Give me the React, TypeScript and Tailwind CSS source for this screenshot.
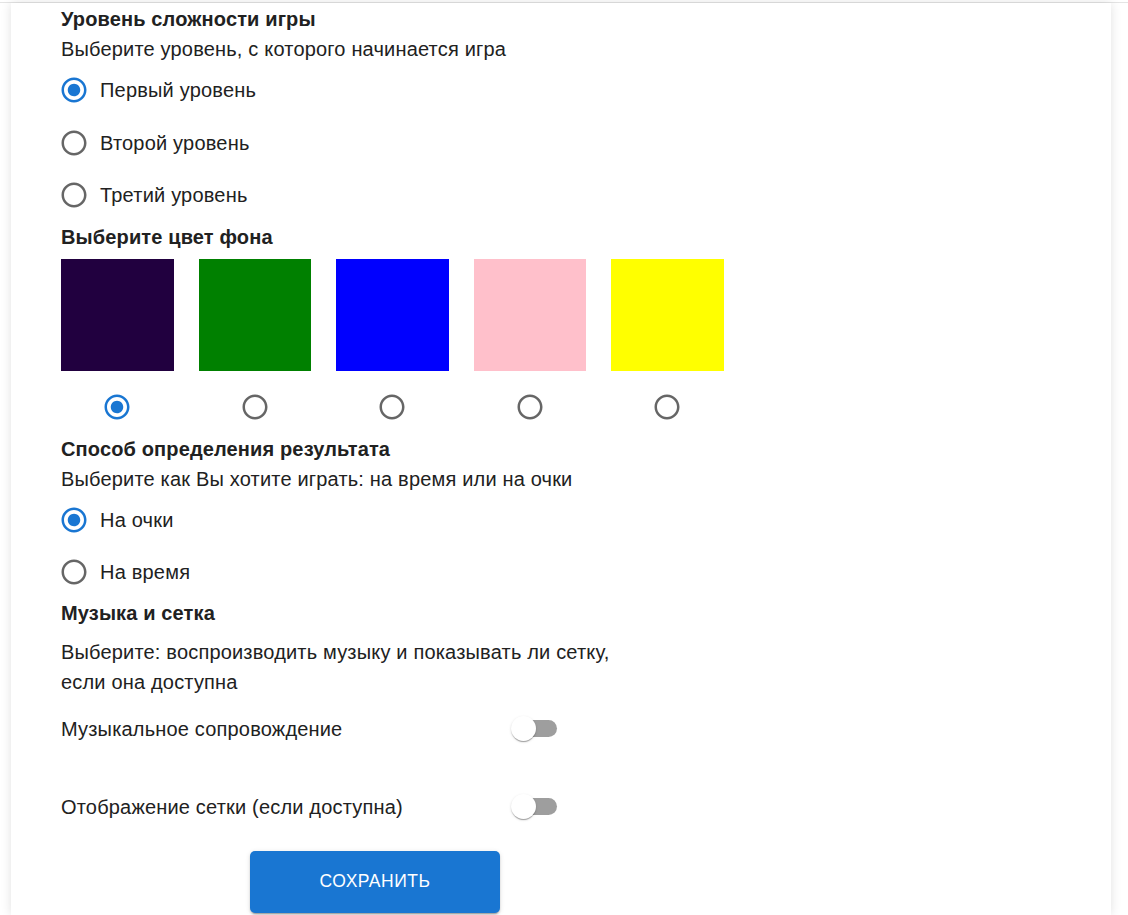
import React from "react";

const FONT = { fontFamily: '"Liberation Sans", Arial, Helvetica, sans-serif' };

function RadioIcon({ checked }: { checked: boolean }) {
  return (
    <svg width="30" height="30" viewBox="0 0 24 24" className="shrink-0">
      <path
        fill={checked ? "#1976d2" : "#666666"}
        d="M12 2C6.48 2 2 6.48 2 12s4.48 10 10 10 10-4.48 10-10S17.52 2 12 2zm0 18c-4.42 0-8-3.58-8-8s3.58-8 8-8 8 3.58 8 8-3.58 8-8 8z"
      />
      {checked && (
        <path
          fill="#1976d2"
          d="M8.465 8.465C9.37 7.56 10.62 7 12 7C14.76 7 17 9.24 17 12C17 13.38 16.44 14.63 15.535 15.535C14.63 16.44 13.38 17 12 17C9.24 17 7 14.76 7 12C7 10.62 7.56 9.37 8.465 8.465Z"
        />
      )}
    </svg>
  );
}

function RadioRow({ label, checked }: { label: string; checked: boolean }) {
  return (
    <div className="flex h-[52.5px] items-center">
      <div className="-ml-[2.5px] flex items-center">
        <RadioIcon checked={checked} />
      </div>
      <span className="ml-[11.5px] text-[20px] leading-[30px] tracking-[0.2px] text-[#212121]">{label}</span>
    </div>
  );
}

function Heading({ children }: { children: React.ReactNode }) {
  return <div className="text-[20px] font-bold leading-[30px] tracking-[0.14px] text-[#212121]">{children}</div>;
}

function Text({ children }: { children: React.ReactNode }) {
  return <div className="text-[20px] leading-[30px] tracking-[0.18px] text-[#212121]">{children}</div>;
}

function Switch() {
  return (
    <div className="relative h-[30px] w-[50px]">
      <div className="absolute left-[3.5px] top-[6.25px] h-[17.5px] w-[42.5px] rounded-full bg-[#9e9e9e]" />
      <div className="absolute left-0 top-[2.5px] h-[25px] w-[25px] rounded-full bg-white shadow-[0_2px_1px_-1px_rgba(0,0,0,0.2),0_1px_1px_0_rgba(0,0,0,0.14),0_1px_3px_0_rgba(0,0,0,0.12)]" />
    </div>
  );
}

const colors = ["#21003f", "#008000", "#0000ff", "#ffc0cb", "#ffff00"];

export default function App() {
  return (
    <div className="min-h-[915px] bg-white" style={FONT}>
      <div className="h-[2px] bg-white" />
      <div className="h-px bg-[#e4e4e4]" />
      <div className="ml-[11px] h-[912px] w-[1100px] overflow-hidden bg-white pl-[50px] pt-px shadow-[0_0_10px_rgba(0,0,0,0.12)]">
        <Heading>Уровень сложности игры</Heading>
        <Text>Выберите уровень, с которого начинается игра</Text>
        <RadioRow label="Первый уровень" checked />
        <RadioRow label="Второй уровень" checked={false} />
        <RadioRow label="Третий уровень" checked={false} />

        <Heading>Выберите цвет фона</Heading>
        <div className="mt-[7px] flex gap-[25px]">
          {colors.map((c, i) => (
            <div key={c} className="flex w-[112.5px] flex-col items-center">
              <div className="h-[112px] w-[112.5px]" style={{ backgroundColor: c }} />
              <div className="mt-[10px] flex h-[52.5px] items-center">
                <RadioIcon checked={i === 0} />
              </div>
            </div>
          ))}
        </div>

        <div className="mt-[0.5px]">
          <Heading>Способ определения результата</Heading>
          <Text>Выберите как Вы хотите играть: на время или на очки</Text>
        </div>
        <RadioRow label="На очки" checked />
        <RadioRow label="На время" checked={false} />

        <div className="-mt-[0.5px]">
          <Heading>Музыка и сетка</Heading>
        </div>
        <div className="mt-[8.5px] w-[590px]">
          <Text>Выберите: воспроизводить музыку и показывать ли сетку, если она доступна</Text>
        </div>

        <div className="mt-[8px] flex h-[48px] items-center">
          <div className="w-[450px] text-[20px] leading-[30px] tracking-[0.18px] text-[#212121]">Музыкальное сопровождение</div>
          <Switch />
        </div>
        <div className="mt-[30px] flex h-[48px] items-center">
          <div className="w-[450px] text-[20px] leading-[30px] tracking-[0.18px] text-[#212121]">Отображение сетки (если доступна)</div>
          <Switch />
        </div>

        <div className="mt-[20px] pl-[189px]">
          <button className="flex h-[62px] w-[250px] items-center justify-center rounded-[5px] bg-[#1976d2] pb-px text-[17.5px] font-medium tracking-[0.5px] text-white shadow-[0_3px_1px_-2px_rgba(0,0,0,0.2),0_2px_2px_0_rgba(0,0,0,0.14),0_1px_5px_0_rgba(0,0,0,0.12)]">
            СОХРАНИТЬ
          </button>
        </div>
      </div>
    </div>
  );
}
